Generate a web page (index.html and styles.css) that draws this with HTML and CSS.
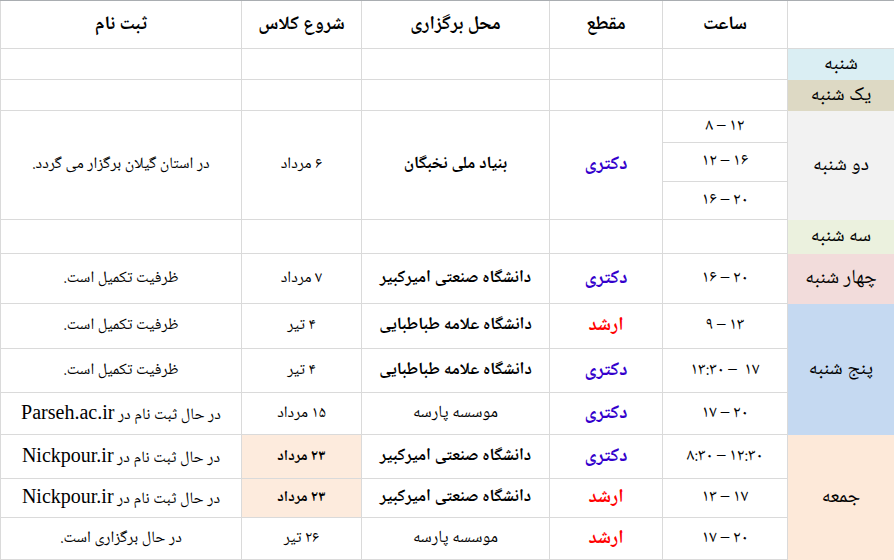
FILE: index.html
```html
<!DOCTYPE html>
<html lang="fa" dir="rtl">
<head>
<meta charset="utf-8">
<title>برنامه کلاس‌ها</title>
<link rel="stylesheet" href="styles.css">
</head>
<body>
<table class="sched">
  <colgroup>
    <col class="c-day"><col class="c-time"><col class="c-level"><col class="c-place"><col class="c-start"><col class="c-reg">
  </colgroup>
  <thead>
    <tr class="r48">
      <th class="day-head"></th>
      <th>ساعت</th>
      <th>مقطع</th>
      <th>محل برگزاری</th>
      <th>شروع کلاس</th>
      <th>ثبت نام</th>
    </tr>
  </thead>
  <tbody>
    <tr class="r31">
      <td class="day d-sat">شنبه</td>
      <td></td><td></td><td></td><td></td><td></td>
    </tr>
    <tr class="r31">
      <td class="day d-sun">یک شنبه</td>
      <td></td><td></td><td></td><td></td><td></td>
    </tr>
    <tr class="r32">
      <td class="day d-mon" rowspan="3">دو شنبه</td>
      <td class="time">۱۲ – ۸</td>
      <td class="lvl phd" rowspan="3">دکتری</td>
      <td class="place" rowspan="3">بنیاد ملی نخبگان</td>
      <td rowspan="3">۶ مرداد</td>
      <td rowspan="3">در استان گیلان برگزار می گردد.</td>
    </tr>
    <tr class="r39"><td class="time">۱۶ – ۱۲</td></tr>
    <tr class="r38"><td class="time">۲۰ – ۱۶</td></tr>
    <tr class="r34">
      <td class="day d-tue">سه شنبه</td>
      <td></td><td></td><td></td><td></td><td></td>
    </tr>
    <tr class="r50">
      <td class="day d-wed">چهار شنبه</td>
      <td class="time">۲۰ – ۱۶</td>
      <td class="lvl phd">دکتری</td>
      <td class="place">دانشگاه صنعتی امیرکبیر</td>
      <td>۷ مرداد</td>
      <td>ظرفیت تکمیل است.</td>
    </tr>
    <tr class="r45">
      <td class="day d-thu" rowspan="3">پنج شنبه</td>
      <td class="time">۱۳ – ۹</td>
      <td class="lvl ms">ارشد</td>
      <td class="place">دانشگاه علامه طباطبایی</td>
      <td>۴ تیر</td>
      <td>ظرفیت تکمیل است.</td>
    </tr>
    <tr class="r44">
      <td class="time">۱۷ &nbsp;– ۱۳:۳۰</td>
      <td class="lvl phd">دکتری</td>
      <td class="place">دانشگاه علامه طباطبایی</td>
      <td>۴ تیر</td>
      <td>ظرفیت تکمیل است.</td>
    </tr>
    <tr class="r42">
      <td class="time">۲۰ – ۱۷</td>
      <td class="lvl phd">دکتری</td>
      <td class="place plain">موسسه پارسه</td>
      <td>۱۵ مرداد</td>
      <td>در حال ثبت نام در <span class="latin">Parseh.ac.ir</span></td>
    </tr>
    <tr class="r44">
      <td class="day d-fri" rowspan="3">جمعه</td>
      <td class="time">۱۲:۳۰ – ۸:۳۰</td>
      <td class="lvl phd">دکتری</td>
      <td class="place">دانشگاه صنعتی امیرکبیر</td>
      <td class="hl">۲۳ مرداد</td>
      <td>در حال ثبت نام در <span class="latin">Nickpour.ir</span></td>
    </tr>
    <tr class="r39">
      <td class="time">۱۷ – ۱۳</td>
      <td class="lvl ms">ارشد</td>
      <td class="place">دانشگاه صنعتی امیرکبیر</td>
      <td class="hl">۲۳ مرداد</td>
      <td>در حال ثبت نام در <span class="latin">Nickpour.ir</span></td>
    </tr>
    <tr class="r42">
      <td class="time">۲۰ – ۱۷</td>
      <td class="lvl ms">ارشد</td>
      <td class="place plain">موسسه پارسه</td>
      <td>۲۶ تیر</td>
      <td>در حال برگزاری است.</td>
    </tr>
  </tbody>
</table>
</body>
</html>
```

FILE: styles.css
```css
html, body {
  margin: 0;
  padding: 0;
  background: #ffffff;
}

body {
  width: 894px;
  height: 560px;
  overflow: hidden;
  font-family: "Noto Naskh Arabic", "Noto Sans Arabic", "DejaVu Sans", sans-serif;
  color: #000;
}

.sched {
  direction: rtl;
  width: 894px;
  table-layout: fixed;
  border-collapse: separate;
  border-spacing: 0;
  border-top: 1px solid #a9adb1;
}

.c-day { width: 107px; }
.c-time { width: 125px; }
.c-level { width: 113px; }
.c-place { width: 188px; }
.c-start { width: 120px; }
.c-reg { width: 241px; }

.sched th,
.sched td {
  box-sizing: border-box;
  padding: 0;
  text-align: center;
  vertical-align: middle;
  border-left: 1px solid #dadada;
  border-bottom: 1px solid #dadada;
  font-size: 16px;
  line-height: 20px;
  white-space: nowrap;
}

.sched th {
  font-size: 19px;
  font-weight: bold;
}

.r48 { height: 48px; }
.r31 { height: 31px; }
.r32 { height: 32px; }
.r34 { height: 34px; }
.r38 { height: 38px; }
.r39 { height: 39px; }
.r42 { height: 42px; }
.r44 { height: 44px; }
.r45 { height: 45px; }
.r50 { height: 50px; }

.sched td.day {
  font-size: 20px;
  border-bottom: none;
}

.sched td.time { font-size: 17px; }

.d-sat { background: #daeef3; }
.d-sun { background: #ddd9c4; }
.d-mon { background: #f2f2f2; }
.d-tue { background: #ebf1de; }
.d-wed { background: #f2dcdb; }
.d-thu { background: #c5d9f1; }
.d-fri { background: #fde9d9; }

.sched td.lvl {
  font-weight: bold;
  font-size: 19px;
}
.phd { color: #3300cc; }
.ms { color: #ff0000; }

.sched td.place {
  font-weight: bold;
  font-size: 17px;
}
.sched td.place.plain { font-weight: normal; }

.sched td.hl {
  background: #fdebdd;
  font-weight: bold;
  font-size: 15px;
}

.latin {
  font-family: "Liberation Serif", "Times New Roman", serif;
  font-weight: normal;
  font-size: 20px;
}
```
